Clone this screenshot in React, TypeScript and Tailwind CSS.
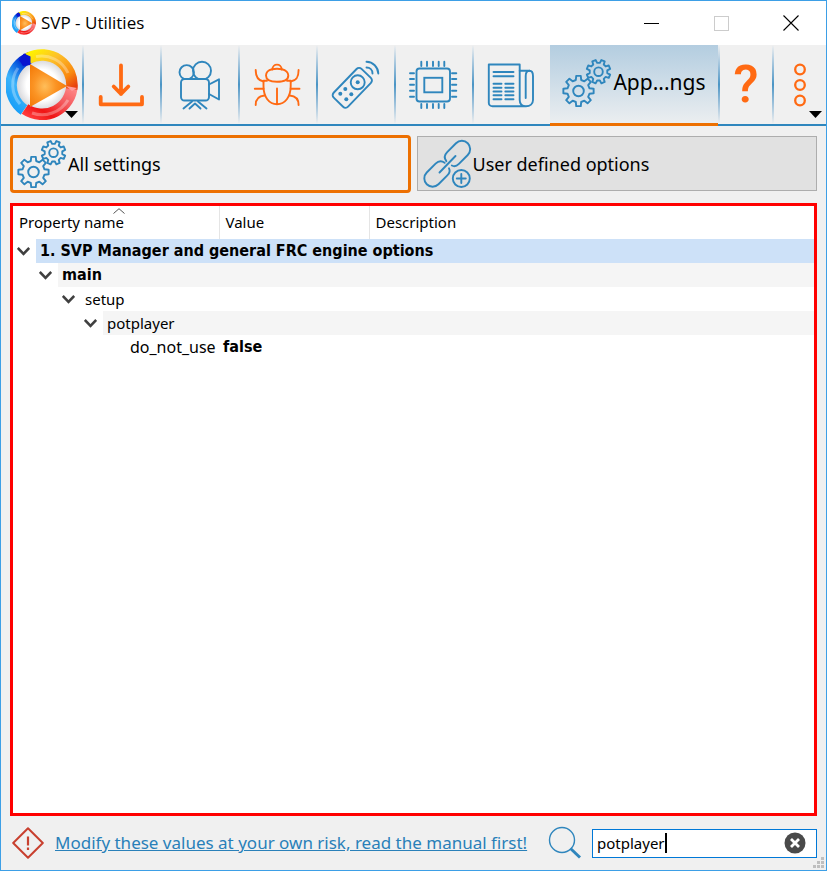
import { useId, useState, type ReactNode } from "react";
import clsx from "clsx";

const BLUE = "#2f86bd";
const ORANGE = "#ff6a13";

function Logo({ className }: { className?: string }) {
  const id = useId();
  return (
    <svg viewBox="0 0 72 72" className={className} aria-hidden="true">
      <defs>
        <linearGradient id={`${id}b`} x1="0.7" y1="0" x2="0.3" y2="1">
          <stop offset="0" stopColor="#0010c8" />
          <stop offset="0.25" stopColor="#0a5fe0" />
          <stop offset="0.6" stopColor="#3db4fb" />
          <stop offset="1" stopColor="#1ba0f8" />
        </linearGradient>
        <linearGradient id={`${id}y`} x1="0" y1="0" x2="1" y2="1">
          <stop offset="0" stopColor="#fff000" />
          <stop offset="0.35" stopColor="#fdc02a" />
          <stop offset="0.75" stopColor="#f98a10" />
          <stop offset="1" stopColor="#e8400c" />
        </linearGradient>
        <linearGradient id={`${id}r`} x1="1" y1="0" x2="0" y2="1">
          <stop offset="0" stopColor="#ff8c8c" />
          <stop offset="0.4" stopColor="#f4585c" />
          <stop offset="0.75" stopColor="#f01414" />
          <stop offset="1" stopColor="#ff3a3a" />
        </linearGradient>
        <radialGradient id={`${id}w`}>
          <stop offset="0.6" stopColor="#ffffff" />
          <stop offset="1" stopColor="#d4d4d8" />
        </radialGradient>
        <radialGradient id={`${id}t`} cx="0.4" cy="0.52" r="0.6">
          <stop offset="0" stopColor="#ffbe5a" />
          <stop offset="0.5" stopColor="#fb9424" />
          <stop offset="1" stopColor="#f47a08" />
        </radialGradient>
      </defs>
      <circle cx="36" cy="36" r="26" fill={`url(#${id}w)`} />
      <g fill="none" strokeWidth="11.500">
        <path d="M24.500 8.300A30 30 0 0 0 18 61" stroke={`url(#${id}b)`} />
        <path d="M19 60A30 30 0 0 0 66 36" stroke={`url(#${id}r)`} />
        <path d="M22 9.400A30 30 0 0 1 65.700 40" stroke={`url(#${id}y)`} />
      </g>
      <g fill="none" stroke="#fff" strokeOpacity="0.3" strokeWidth="3">
        <path d="M12 19A29 29 0 0 0 14 55" />
        <path d="M30 7.600A29 29 0 0 1 62 24" />
        <path d="M26 64A30 30 0 0 0 62 51" />
      </g>
      <path d="M18 4.500L24.500 7.500V16L17 17L13 11Z" fill="#0a14d0" />
      <path d="M24 15L61 37L24 58Z" fill={`url(#${id}t)`} />
      <path d="M60 37L71 39L66 42Z" fill="#ff9c9c" />
    </svg>
  );
}

function Icon({ color = BLUE, children }: { color?: string; children: ReactNode }) {
  return (
    <svg
      viewBox="0 0 48 48"
      className="size-12 shrink-0 overflow-visible"
      fill="none"
      stroke={color}
      strokeWidth="1.900"
      strokeLinecap="round"
      strokeLinejoin="round"
      aria-hidden="true"
    >
      {children}
    </svg>
  );
}

// eight-toothed gear outline around (cx, cy)
function gearPath(cx: number, cy: number, r: number, turn: number) {
  const pts: string[] = [];
  for (let i = 0; i < 8; i++) {
    const a = turn + (i * Math.PI) / 4;
    for (const [da, k] of [
      [-0.24, 0.74],
      [-0.15, 1],
      [0.15, 1],
      [0.24, 0.74],
    ]) {
      pts.push(`${(cx + r * k * Math.cos(a + da)).toFixed(2)} ${(cy + r * k * Math.sin(a + da)).toFixed(2)}`);
    }
  }
  return `M${pts.join("L")}Z`;
}

function GearsIcon() {
  return (
    <Icon>
      <path d={gearPath(16.5, 32, 15.3, 0)} />
      <circle cx="16.500" cy="32" r="5.300" />
      <path d={gearPath(36.5, 12.7, 12, Math.PI / 8)} />
      <circle cx="36.500" cy="12.700" r="4.300" />
    </Icon>
  );
}

function DownloadIcon() {
  return (
    <Icon color={ORANGE}>
      <g strokeWidth="3.800">
        <path d="M23 4.500V33M15.700 25.500L23 32.800L30.300 25.500" />
        <path d="M2.700 36V43.300H44V36" />
      </g>
    </Icon>
  );
}

function CameraIcon() {
  return (
    <Icon>
      <circle cx="10.700" cy="11.300" r="7.200" />
      <circle cx="26" cy="9.700" r="9" />
      <rect x="5" y="18" width="28" height="21.500" rx="3.500" fill="#f0f0f0" />
      <path d="M33 23.500L43 18.300V38.500L33 33" />
      <path d="M7.500 47.500L16 40.500M13.500 47.500L19 42.500L24.500 47.500M22 40.500L30.500 47.500" />
    </Icon>
  );
}

function BugIcon() {
  return (
    <Icon color={ORANGE}>
      <path d="M18.300 8.500C18.500 2 27.500 2 27.700 8.500" />
      <path d="M18 8.200C14 9 12 12 12 14.500C12 20 17 20.800 23 20.800S34.300 20 34.300 14.500C34.300 12 32 9 28 8.200C25 7.700 21 7.700 18 8.200Z" />
      <path d="M13 19.800H9.500V25C9.500 36 15 43.300 23 43.300S36.700 36 36.700 25V19.800H33" />
      <path d="M23 27.500V43" />
      <path d="M1.700 9C1.700 15 3 19.500 9.500 20.500M0.800 27.700H9.500M1.700 44C1.700 38 4 35 10.500 34.500" />
      <path d="M44.600 9C44.600 15 43.300 19.500 36.700 20.500M45.500 27.700H36.700M44.600 44C44.600 38 42 35 35.700 34.500" />
    </Icon>
  );
}

function RemoteIcon() {
  return (
    <Icon>
      <rect x="-20" y="-10" width="40" height="20" rx="3.500" transform="translate(20.300 26.800) rotate(-46)" />
      <circle cx="25.700" cy="21.300" r="7" />
      <g fill={BLUE} stroke="none">
        <circle cx="25.700" cy="21.300" r="2" />
        <circle cx="13.300" cy="28" r="2" />
        <circle cx="8.300" cy="32.700" r="2" />
        <circle cx="19.300" cy="33.300" r="2" />
        <circle cx="14.300" cy="38.300" r="2" />
      </g>
      <path d="M34.500 6.500C38 6.500 40.500 9 40.500 12.500M34.500 0.800C41 1 46 6 46.300 12.500" />
    </Icon>
  );
}

function ChipIcon() {
  return (
    <Icon>
      <rect x="6.500" y="7.500" width="33.500" height="33" rx="3" />
      <rect x="14.300" y="16.800" width="18" height="14.500" strokeLinejoin="miter" />
      {[11.3, 17, 23, 28.7, 34.3].map((x) => (
        <path key={x} d={`M${x} 0.700V5M${x} 43V47`} />
      ))}
      {[12.3, 18, 23.7, 29.7, 35.7].map((y) => (
        <path key={y} d={`M0 ${y}H4M42 ${y}H46.300`} />
      ))}
    </Icon>
  );
}

function NewsIcon() {
  return (
    <Icon>
      <path d="M38 45.300H4.500C2.500 45.300 0.800 44 0.800 42V3.500H31.700V39C31.700 43 34 45.300 38 45.300S45 43 45 39V15C45 11.500 43.500 9.700 41.500 9.700S37.700 11.500 37.700 15V37" />
      <path d="M31.700 9.700H41.500M5.500 11H25.500M5.500 15.300H25.500" />
      {[22.7, 26.7, 30.5, 34.3, 38.2].map((y) => (
        <path key={y} d={`M5.500 ${y}H13.500M17.300 ${y}H25.500`} />
      ))}
    </Icon>
  );
}

function DotsIcon() {
  return (
    <Icon color={ORANGE}>
      <g strokeWidth="2.300">
        <circle cx="24" cy="8.500" r="4.800" />
        <circle cx="24" cy="24" r="4.800" />
        <circle cx="24" cy="39.500" r="4.800" />
      </g>
    </Icon>
  );
}

function LinkPlusIcon() {
  return (
    <Icon>
      <path
        d="M-14 -2.500C-13.500 -6 -11 -8.300 -7 -8.300H5.500A8.300 8.300 0 0 1 5.500 8.300H-7C-10 8.300 -12.500 6.800 -13.200 4.500"
        transform="translate(36 13) rotate(-45)"
      />
      <path
        d="M14 -2.500C13.500 -6 11 -8.300 7 -8.300H-5.500A8.300 8.300 0 0 0 -5.500 8.300H7C10 8.300 12.500 6.800 13.200 4.500"
        transform="translate(14.500 34.500) rotate(-45)"
      />
      <path d="M17.500 32.500L33.500 16" />
      <circle cx="39.300" cy="38.500" r="8.500" fill="#e1e1e1" />
      <path d="M34.800 38.500H43.800M39.300 34V43" />
    </Icon>
  );
}

function MenuArrow() {
  return (
    <svg viewBox="0 0 13 7" className="absolute right-1 bottom-1.5 h-[7px] w-[13px]" aria-hidden="true">
      <path d="M0 0H13L6.500 7Z" fill="#000" />
    </svg>
  );
}

function Divider() {
  return (
    <span className="w-0.5 shrink-0 border-b-2 border-[#2f86bd] bg-linear-to-b from-[#f0f0f0] via-[#4a95c5] to-[#f0f0f0]" />
  );
}

function ToolButton({ label, className, children }: { label: string; className?: string; children: ReactNode }) {
  return (
    <button
      type="button"
      aria-label={label}
      className={clsx("relative flex items-center justify-center border-b-2 border-[#2f86bd]", className ?? "flex-1")}
    >
      {children}
    </button>
  );
}

const tools = [
  { label: "Updates", icon: <DownloadIcon /> },
  { label: "Video", icon: <CameraIcon /> },
  { label: "Debug", icon: <BugIcon /> },
  { label: "Remote control", icon: <RemoteIcon /> },
  { label: "Hardware", icon: <ChipIcon /> },
  { label: "News", icon: <NewsIcon /> },
];

const boldText = "font-['DejaVu_Sans_Condensed','DejaVu_Sans',sans-serif] text-base font-bold";

const rows = [
  { name: "1. SVP Manager and general FRC engine options", pad: "pl-1", fill: "bg-[#cde1f8]", bold: true },
  { name: "main", pad: "pl-[26px]", fill: "bg-[#f5f5f5]", bold: true },
  { name: "setup", pad: "pl-[49px]", fill: "bg-white" },
  { name: "potplayer", pad: "pl-[71px]", fill: "bg-[#f5f5f5]" },
];

export default function App() {
  const [query, setQuery] = useState("potplayer");

  return (
    <div className="flex h-screen flex-col border border-[#3d9fe6] bg-[#f0f0f0] font-['Noto_Sans','Open_Sans',sans-serif] text-[15px] text-black">
      <header className="flex h-11 shrink-0 items-center bg-white pl-[11px]">
        <Logo className="size-6" />
        <h1 className="ml-[5px] flex-1 font-['Open_Sans',sans-serif] text-[17px]">SVP - Utilities</h1>
        <button type="button" aria-label="Minimize" className="flex h-full w-[70px] items-center justify-center">
          <span className="h-px w-[15px] bg-black" />
        </button>
        <button type="button" aria-label="Maximize" disabled className="flex h-full w-[70px] items-center justify-center">
          <span className="size-[15px] border border-[#cccccc]" />
        </button>
        <button type="button" aria-label="Close" className="flex h-full w-[70px] items-center justify-center">
          <svg viewBox="0 0 16 16" className="size-4" stroke="#000" strokeWidth="1.100">
            <path d="M0.500 0.500L15.500 15.500M15.500 0.500L0.500 15.500" />
          </svg>
        </button>
      </header>

      <nav className="flex h-[81px] shrink-0">
        <ToolButton label="Main menu" className="flex-[81]">
          <Logo className="size-[72px]" />
          <MenuArrow />
        </ToolButton>
        {tools.map((tool) => (
          <div key={tool.label} className="flex flex-[78]">
            <Divider />
            <ToolButton label={tool.label}>{tool.icon}</ToolButton>
          </div>
        ))}
        <button
          type="button"
          className="flex flex-[168] items-center justify-center gap-[3px] border-b-3 border-[#ed7001] bg-linear-to-b from-[#b3cde0] to-[#ebeef0] pb-0.5 text-[21px] whitespace-nowrap"
        >
          <GearsIcon />
          App...ngs
        </button>
        <Divider />
        <ToolButton label="Help" className="flex-[52]">
          <span className="font-['Roboto',sans-serif] text-[52px] leading-none font-medium text-[#ff6a13]">?</span>
        </ToolButton>
        <Divider />
        <ToolButton label="More" className="flex-[52]">
          <DotsIcon />
          <MenuArrow />
        </ToolButton>
      </nav>

      <main className="flex min-h-0 flex-1 flex-col px-[9px]">
        <div className="grid grid-cols-2 gap-1.5 pt-[9px] text-lg">
          <button
            type="button"
            className="flex h-[58px] items-center gap-[3px] rounded-sm border-3 border-[#ed7001] pl-1"
          >
            <GearsIcon />
            All settings
          </button>
          <button
            type="button"
            className="mt-px mb-0.5 flex items-center gap-[3px] border border-[#adadad] bg-[#e1e1e1] pl-1"
          >
            <LinkPlusIcon />
            User defined options
          </button>
        </div>

        <div className="mt-2.5 flex-1 overflow-hidden border-3 border-[#ff0000] bg-white">
          <table className="w-full table-fixed border-collapse">
            <colgroup>
              <col className="w-[206px]" />
              <col className="w-[150px]" />
              <col />
            </colgroup>
            <thead>
              <tr className="h-[33px] text-left">
                <th className="relative border-r border-[#e5e5e5] px-1.5 font-normal">
                  Property name
                  <svg viewBox="0 0 12 6" className="absolute top-0.5 left-[100px] h-1.5 w-3" fill="none" stroke="#555">
                    <path d="M0.500 5.500L6 0.700L11.500 5.500" />
                  </svg>
                </th>
                <th className="border-r border-[#e5e5e5] px-1.5 font-normal">Value</th>
                <th className="px-1.5 font-normal">Description</th>
              </tr>
            </thead>
            <tbody>
              {rows.map((row) => (
                <tr key={row.name} className="h-6">
                  <td colSpan={3} className={clsx("p-0", row.pad)}>
                    <div className="flex h-6">
                      <button type="button" aria-label="Collapse" className="flex w-[19px] items-center">
                        <svg viewBox="0 0 13 9" className="h-[9px] w-[13px]" fill="none" stroke="#404040" strokeWidth="2.600">
                          <path d="M0.800 1L6.500 6.800L12.200 1" />
                        </svg>
                      </button>
                      <span className={clsx("flex-1 pl-1 whitespace-nowrap", row.fill, row.bold && boldText, "leading-6")}>
                        {row.name}
                      </span>
                    </div>
                  </td>
                </tr>
              ))}
              <tr className="h-6 text-base">
                <td className="py-0 pr-0 pl-[117px] leading-6">do_not_use</td>
                <td className={clsx("py-0 pl-1", boldText, "leading-6")}>false</td>
                <td />
              </tr>
            </tbody>
          </table>
        </div>
      </main>

      <footer className="relative flex h-[54px] shrink-0 items-center pr-[9px] pl-[11px]">
        <svg viewBox="0 0 32 32" className="size-8 shrink-0" fill="none" stroke="#c8402f" strokeWidth="2" aria-hidden="true">
          <path d="M16 1.200L30.800 16L16 30.800L1.200 16Z" strokeLinejoin="round" />
          <path d="M16 9.500V18.500M16 20.500V23" strokeWidth="2.200" />
        </svg>
        <a href="#manual" className="ml-[11px] text-[17px] whitespace-nowrap text-[#2980b9] underline">
          Modify these values at your own risk, read the manual first!
        </a>
        <label htmlFor="search" aria-label="Search" className="ml-auto shrink-0">
          <svg viewBox="0 0 34 34" className="size-[34px]" fill="none" stroke="#2f86bd" aria-hidden="true">
            <circle cx="14" cy="14" r="12.500" strokeWidth="1.400" />
            <path d="M22.500 22.500L32 31.500" strokeWidth="3" />
          </svg>
        </label>
        <div className="ml-2.5 flex h-[29px] w-[225px] shrink-0 items-center border border-[#0078d7] bg-white pr-2.5 pl-1">
          <input
            id="search"
            value={query}
            onChange={(e) => setQuery(e.target.value)}
            className="field-sizing-content min-w-px outline-none"
          />
          <span className="h-5 w-0.5 bg-black" />
          <button type="button" aria-label="Clear" onClick={() => setQuery("")} className="ml-auto">
            <svg viewBox="0 0 22 22" className="size-[22px]">
              <circle cx="11" cy="11" r="10.500" fill="#4a4a4a" />
              <path d="M7 7L15 15M15 7L7 15" stroke="#fff" strokeWidth="2.800" />
            </svg>
          </button>
        </div>
        <svg viewBox="0 0 11 11" className="absolute right-0.5 bottom-0.5 size-[11px]" fill="#bfbfbf" aria-hidden="true">
          <path d="M8 0h3v3h-3zM4 4h3v3h-3zM8 4h3v3h-3zM0 8h3v3h-3zM4 8h3v3h-3zM8 8h3v3h-3z" />
        </svg>
      </footer>
    </div>
  );
}
